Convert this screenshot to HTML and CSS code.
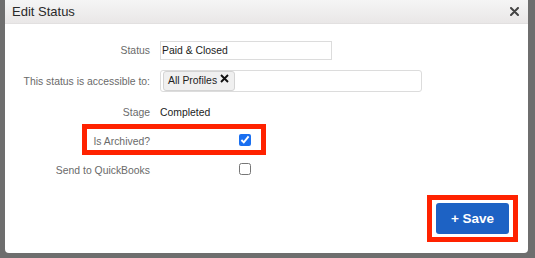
FILE: index.html
```html
<!DOCTYPE html>
<html lang="en">
<head>
    <meta charset="UTF-8">
    <title>Edit Status</title>
    <link rel="stylesheet" href="styles.css">
</head>
<body>
    <div class="dialog">
        <div class="dialog-header">
            <span class="title">Edit Status</span>
            <svg class="close" width="9" height="9" viewBox="0 0 9 9">
                <path d="M1 1L8 8M8 1L1 8" stroke="#444" stroke-width="2" stroke-linecap="round"/>
            </svg>
        </div>
        <div class="dialog-body">
            <div class="row row-status">
                <label class="field-label">Status</label>
                <input type="text" class="text-input status-input" value="Paid &amp; Closed">
            </div>
            <div class="row row-access">
                <label class="field-label">This status is accessible to:</label>
                <div class="tag-input">
                    <span class="tag">All Profiles
                        <svg width="9" height="9" viewBox="0 0 9 9">
                            <path d="M1 1L8 8M8 1L1 8" stroke="#111" stroke-width="1.9"/>
                        </svg>
                    </span>
                </div>
            </div>
            <div class="row row-stage">
                <label class="field-label">Stage</label>
                <span class="value">Completed</span>
            </div>
            <div class="row row-archived">
                <label class="field-label">Is Archived?</label>
                <input type="checkbox" class="check" checked>
            </div>
            <div class="row row-qb">
                <label class="field-label">Send to QuickBooks</label>
                <input type="checkbox" class="check">
            </div>
        </div>
        <div class="dialog-footer">
            <div class="save-mark">
                <button class="save-button">+ Save</button>
            </div>
        </div>
    </div>
</body>
</html>
```

FILE: styles.css
```css
body {
    margin: 0;
    padding: 0;
    background: #6e6e6e;
    font-family: 'Liberation Sans', Arial, sans-serif;
    height: 258px;
    overflow: hidden;
}

.dialog {
    margin-left: 5px;
    width: 523px;
    height: 253px;
    background: #fff;
    border-radius: 0 0 4px 4px;
    display: flex;
    flex-direction: column;
}

.dialog-header {
    height: 24px;
    box-sizing: border-box;
    background: linear-gradient(to bottom, #f5f5f5, #e9e7e7);
    border-bottom: 1px solid #e2e0e0;
    display: flex;
    align-items: center;
    justify-content: space-between;
    padding: 0 9px 0 7px;
}

.title {
    font-size: 13px;
    color: #2a2a2a;
}

.dialog-body {
    padding-top: 17px;
    flex: 1;
}

.row {
    display: flex;
    align-items: center;
    gap: 10px;
}

.field-label {
    width: 145px;
    text-align: right;
    font-size: 10.4px;
    color: #6a6a6a;
}

.value {
    font-size: 10.4px;
    color: #222;
}

.row-status {
    height: 19px;
}

.text-input {
    box-sizing: border-box;
    border: 1px solid #dcdcdc;
    font-family: 'Liberation Sans', Arial, sans-serif;
    font-size: 10.4px;
    color: #222;
    padding: 0 1px;
    margin: 0;
}

.status-input {
    width: 172px;
    height: 19px;
}

.row-access {
    height: 22px;
    margin-top: 10px;
}

.tag-input {
    box-sizing: border-box;
    width: 262px;
    height: 22px;
    border: 1px solid #dcdcdc;
    border-radius: 3px;
    display: flex;
    align-items: center;
    padding-left: 2px;
}

.tag {
    box-sizing: border-box;
    height: 20px;
    display: flex;
    align-items: center;
    gap: 3px;
    padding: 0 5px 2px 4px;
    background: #f0f0f0;
    border: 1px solid #d4d4d4;
    border-radius: 3px;
    font-size: 10.4px;
    color: #222;
}

.tag svg {
    margin-bottom: 3px;
}

.row-stage {
    height: 20px;
    margin-top: 10px;
}

.row-archived {
    position: relative;
    height: 29px;
    margin-top: 3px;
}

.row-archived .field-label {
    padding-top: 4px;
}

.row-archived::after {
    content: "";
    position: absolute;
    left: 77px;
    top: -1px;
    width: 184px;
    height: 31px;
    box-sizing: border-box;
    border: 5px solid #ff2200;
}

.row-qb {
    height: 26px;
    margin-top: 2px;
}

.row-qb .field-label {
    padding-top: 3px;
}

.check {
    width: 12px;
    height: 12px;
    margin: 0 0 0 79px;
    accent-color: #1a6ff0;
}

.dialog-footer {
    display: flex;
    justify-content: flex-end;
    padding: 0 10px 11px 0;
}

.save-mark {
    border: 5px solid #ff2200;
    padding: 3px 4px 3px 4px;
    background: #fff;
}

.save-button {
    display: block;
    width: 73px;
    height: 31px;
    background: #1d62c4;
    color: #fff;
    border: none;
    border-radius: 3px;
    font-family: 'Liberation Sans', Arial, sans-serif;
    font-weight: bold;
    font-size: 13.5px;
}
```
